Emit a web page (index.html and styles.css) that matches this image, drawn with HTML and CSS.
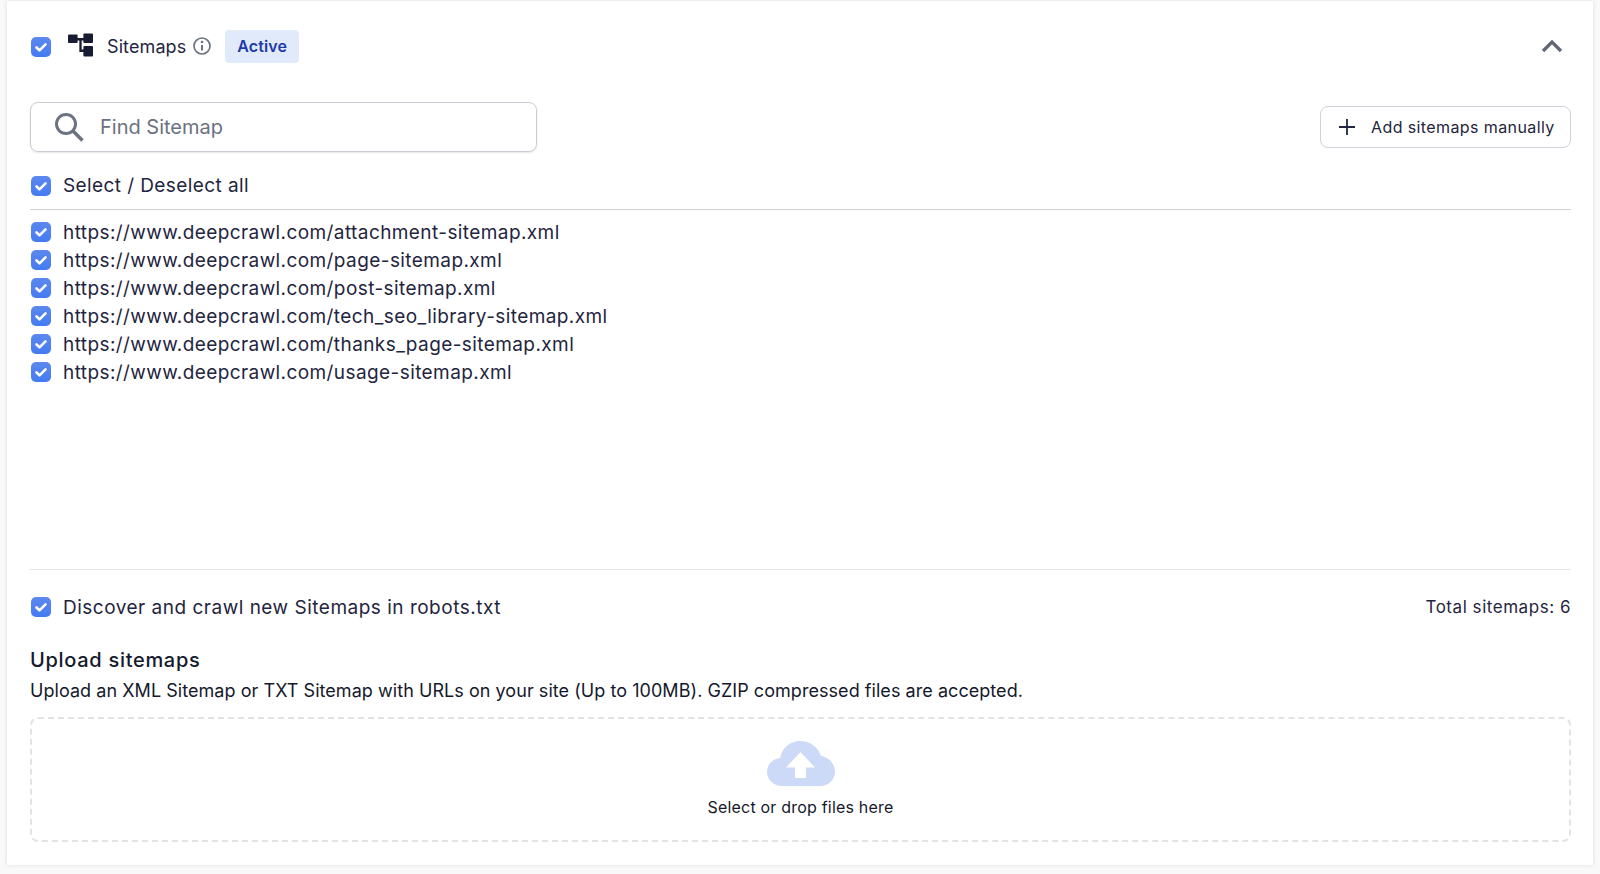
FILE: index.html
```html
<!DOCTYPE html>
<html lang="en">

<head>
    <meta charset="UTF-8">
    <title>Sitemaps</title>
    <link rel="stylesheet" href="styles.css">
</head>

<body>
    <svg class="defs" width="0" height="0">
        <symbol id="tick" viewBox="0 0 20 20">
            <path d="M5.500 10.500l3 2.800 6-6" fill="none" stroke="#fff" stroke-width="2.600" stroke-linecap="round" stroke-linejoin="round" />
        </symbol>
    </svg>
    <div class="card">
        <div class="head">
            <span class="check"><svg><use href="#tick" /></svg></span>
            <svg class="tree" viewBox="0 0 26 24">
                <path d="M8 6h10M13 6v12h5" fill="none" stroke="#171c33" stroke-width="2.400" />
                <rect x="0" y="1" width="10" height="9" rx="1" fill="#171c33" />
                <rect x="16" y="0" width="10" height="10" rx="1" fill="#171c33" />
                <rect x="16" y="13" width="10" height="11" rx="1" fill="#171c33" />
            </svg>
            <span class="title">Sitemaps</span>
            <svg class="info" viewBox="0 0 20 20">
                <circle cx="10" cy="10" r="8" fill="none" stroke="#6b7280" stroke-width="1.700" />
                <path d="M10 9v5.500" stroke="#6b7280" stroke-width="2" />
                <circle cx="10" cy="6" r="1.300" fill="#6b7280" />
            </svg>
            <span class="badge">Active</span>
            <svg class="chevron" viewBox="0 0 22 14">
                <path d="M2 12l9-9 9 9" fill="none" stroke="#5f6675" stroke-width="3.200" />
            </svg>
        </div>

        <div class="tools">
            <div class="search">
                <svg viewBox="0 0 30 30">
                    <circle cx="12" cy="12" r="9.500" fill="none" stroke="#6b7280" stroke-width="3" />
                    <path d="M18.500 18.500l10 10" stroke="#6b7280" stroke-width="3.600" />
                </svg>
                <input type="text" class="target" placeholder="Find Sitemap">
            </div>
            <button class="add">
                <svg viewBox="0 0 18 18">
                    <path d="M9 1v16M1 9h16" stroke="#1f2540" stroke-width="1.800" />
                </svg>
                Add sitemaps manually
            </button>
        </div>

        <div class="row all">
            <span class="check"><svg><use href="#tick" /></svg></span>
            <span>Select / Deselect all</span>
        </div>

        <ul class="list">
            <li class="row"><span class="check"><svg><use href="#tick" /></svg></span><span>https://www.deepcrawl.com/attachment-sitemap.xml</span></li>
            <li class="row"><span class="check"><svg><use href="#tick" /></svg></span><span>https://www.deepcrawl.com/page-sitemap.xml</span></li>
            <li class="row"><span class="check"><svg><use href="#tick" /></svg></span><span>https://www.deepcrawl.com/post-sitemap.xml</span></li>
            <li class="row"><span class="check"><svg><use href="#tick" /></svg></span><span>https://www.deepcrawl.com/tech_seo_library-sitemap.xml</span></li>
            <li class="row"><span class="check"><svg><use href="#tick" /></svg></span><span>https://www.deepcrawl.com/thanks_page-sitemap.xml</span></li>
            <li class="row"><span class="check"><svg><use href="#tick" /></svg></span><span>https://www.deepcrawl.com/usage-sitemap.xml</span></li>
        </ul>

        <div class="foot">
            <div class="row discover">
                <span class="check"><svg><use href="#tick" /></svg></span>
                <span>Discover and crawl new Sitemaps in robots.txt</span>
            </div>
            <span class="total">Total sitemaps: 6</span>
        </div>

        <h3 class="upload">Upload sitemaps</h3>
        <p class="desc">Upload an XML Sitemap or TXT Sitemap with URLs on your site (Up to 100MB). GZIP compressed files are accepted.</p>

        <div class="drop">
            <svg viewBox="0 0 68 46">
                <path d="M15 45C7 45 0 39 0 31c0-7 5-13 13-14C15 7 23 0 33 0c10 0 18 6 21 15 8 1 14 8 14 16 0 8-7 14-15 14z" fill="#ccd9f7" />
                <path d="M33.500 11L48 26.500h-9V37H28V26.500h-9z" fill="#fff" />
            </svg>
            <span>Select or drop files here</span>
        </div>
    </div>
</body>

</html>
```

FILE: styles.css
```css
* {
    box-sizing: border-box;
}

body {
    margin: 0;
    height: 874px;
    overflow: hidden;
    background-color: #f9f9fa;
    font-family: Inter, "Liberation Sans", sans-serif;
    color: #1f2540;
}

.defs {
    position: absolute;
}

.card {
    width: 1586px;
    height: 864px;
    margin: 1px 0 0 7px;
    padding: 0 22px 0 23px;
    background-color: #fff;
    box-shadow: 0 0 4px rgba(0, 0, 0, 0.12);
}

.head {
    height: 91px;
    display: flex;
    align-items: center;
}

.check {
    width: 20px;
    height: 20px;
    margin-left: 1px;
    flex-shrink: 0;
    border-radius: 5px;
    background-image: linear-gradient(180deg, #5c88ef, #447bf2);
}

.check svg {
    display: block;
    width: 20px;
    height: 20px;
}

.tree {
    width: 25px;
    height: 24px;
    margin: 0 14px 0 17px;
    position: relative;
    top: -2px;
}

.title {
    font-size: 18px;
    letter-spacing: 0.1px;
}

.info {
    width: 20px;
    height: 20px;
    margin: 0 13px 0 6px;
    position: relative;
    top: -1px;
}

.badge {
    height: 33px;
    line-height: 33px;
    padding: 0 12px 0 12px;
    border-radius: 4px;
    font-size: 16px;
    font-weight: 600;
    letter-spacing: 0.1px;
    color: #1c3aa9;
    background-color: #e1eafb;
}

.chevron {
    width: 22px;
    height: 14px;
    margin-left: auto;
    margin-right: 8px;
    position: relative;
    top: -1px;
}

.tools {
    display: flex;
    justify-content: space-between;
    align-items: center;
    height: 70px;
}

.search {
    width: 507px;
    height: 50px;
    display: flex;
    align-items: center;
    gap: 14px;
    padding-left: 23px;
    border: 1px solid #c9ccd3;
    border-radius: 8px;
    box-shadow: 0 1px 2px rgba(0, 0, 0, 0.1);
}

.search svg {
    width: 30px;
    height: 30px;
}

.target {
    border: none;
    outline: none;
    width: 300px;
    font-family: inherit;
    font-size: 20px;
}

.target::placeholder {
    color: #6b7280;
}

.add {
    width: 251px;
    height: 42px;
    display: flex;
    align-items: center;
    gap: 15px;
    padding: 0 0 0 17px;
    border: 1px solid #cfd2d9;
    border-radius: 8px;
    background-color: #fff;
    font-family: inherit;
    font-size: 16px;
    letter-spacing: 0.4px;
    color: #1f2540;
}

.add svg {
    width: 18px;
    height: 18px;
}

.row {
    display: flex;
    align-items: center;
    gap: 12px;
    height: 28px;
    font-size: 19px;
    letter-spacing: 0.41px;
}

.all {
    height: 48px;
    border-bottom: 1px solid #cfd2d6;
}

.list {
    list-style-type: none;
    margin: 0;
    padding: 8px 0 0;
    height: 360px;
    border-bottom: 1px solid #e6e7ea;
}

.foot {
    display: flex;
    justify-content: space-between;
    align-items: center;
    height: 75px;
    padding-bottom: 1px;
}

.discover {
    letter-spacing: 0.5px;
}

.total {
    font-size: 17px;
    letter-spacing: 0.54px;
}

.upload {
    margin: 1px 0 0;
    font-size: 20px;
    font-weight: 500;
    letter-spacing: 0.7px;
    line-height: 28px;
    color: #15192b;
}

.desc {
    margin: 4px 0 0;
    font-size: 18px;
    letter-spacing: 0.05px;
    line-height: 26px;
    color: #15192b;
}

.drop {
    height: 125px;
    margin-top: 13px;
    display: flex;
    flex-direction: column;
    align-items: center;
    padding-top: 22px;
    gap: 10px;
    border: 2px dashed #e2e3e6;
    border-radius: 8px;
    font-size: 16px;
    letter-spacing: 0.2px;
    color: #15192b;
}

.drop svg {
    width: 68px;
    height: 46px;
}
```
